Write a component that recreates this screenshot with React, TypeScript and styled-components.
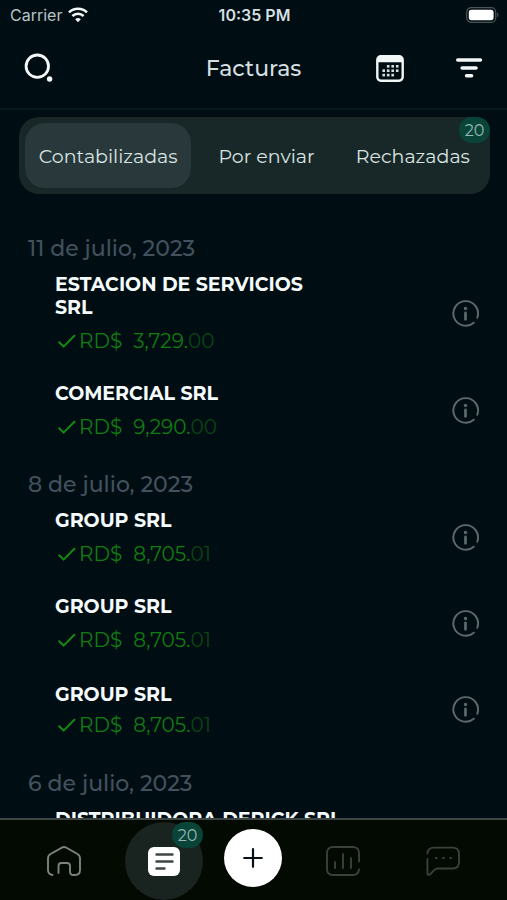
import React from "react";
import styled, { createGlobalStyle } from "styled-components";

const GlobalStyle = createGlobalStyle`
  * { box-sizing: border-box; }
  body {
    margin: 0;
    background: #000e13;
    font-family: Montserrat, Inter, sans-serif;
    color: #d5dfe0;
  }
  button { font: inherit; color: inherit; background: none; border: 0; padding: 0; cursor: pointer; }
  h1, h2, h3, p, ul { margin: 0; padding: 0; font-weight: 400; }
  ul { list-style: none; }
  svg { display: block; }
`;

const Screen = styled.div`
  display: flex;
  flex-direction: column;
  height: 100vh;
  overflow: hidden;
`;

const StatusBar = styled.div`
  display: grid;
  grid-template-columns: 1fr auto 1fr;
  align-items: center;
  height: 30px;
  flex: none;
  padding: 0 8px 0 10px;
  font-family: Inter, sans-serif;
  font-size: 16px;
`;

const Carrier = styled.div`
  display: flex;
  align-items: center;
  gap: 6px;
  color: #b9c2c5;
`;

const Clock = styled.time`
  font-weight: 600;
`;

const Battery = styled.div`
  justify-self: end;
`;

const Header = styled.header`
  display: grid;
  grid-template-columns: 1fr auto 1fr;
  align-items: center;
  flex: none;
  height: 80px;
  padding: 0 24px 2px;
  border-bottom: 2px solid #07191d;
`;

const Title = styled.h1`
  padding-top: 2px;
  font-size: 22px;
  font-weight: 500;
  line-height: 28px;
`;

const Actions = styled.div`
  display: flex;
  justify-content: flex-end;
  gap: 51px;
`;

const IconButton = styled.button`
  display: grid;
  place-items: center;
  justify-self: start;
  height: 30px;
`;

const Tabs = styled.div`
  position: relative;
  display: grid;
  grid-template-columns: 166fr 150fr 142fr;
  flex: none;
  margin: 7px 17px 0 19px;
  padding: 6px;
  height: 77px;
  border-radius: 20px;
  background: #182828;
`;

const Tab = styled.button<{ $active?: boolean }>`
  padding-top: 2px;
  border-radius: 20px;
  font-size: 19px;
  white-space: nowrap;
  color: #d8e3e2;
  background: ${(p) => (p.$active ? "#28383b" : "transparent")};
`;

const Badge = styled.span`
  position: absolute;
  top: 0;
  right: 0;
  display: grid;
  place-items: center;
  width: 31px;
  height: 26px;
  border-radius: 13px;
  background: #0a4439;
  color: #94b7b1;
  font-size: 16px;
`;

const List = styled.main`
  flex: 1;
  min-height: 0;
  margin-top: 41px;
  overflow-y: auto;
  scrollbar-width: none;
`;

const Day = styled.section`
  padding: 0 28px;
  margin-bottom: 32px;
`;

const DayTitle = styled.h2`
  font-size: 22px;
  font-weight: 500;
  line-height: 28px;
  margin-bottom: 10px;
  color: #43515e;
`;

const Invoices = styled.ul`
  display: flex;
  flex-direction: column;
  gap: 29px;
`;

const Invoice = styled.li<{ $titleOnly?: boolean }>`
  display: flex;
  align-items: center;
  justify-content: space-between;
  min-height: ${(p) => (p.$titleOnly ? 23 : 57)}px;
  padding-left: 27px;
`;

const Summary = styled.div<{ $tight?: boolean }>`
  display: flex;
  flex-direction: column;
  gap: ${(p) => (p.$tight ? 7 : 10)}px;
  max-width: 290px;
`;

const Vendor = styled.h3`
  font-size: 19px;
  line-height: 23px;
  font-weight: 700;
  color: #f5fbfd;
`;

const Amount = styled.p`
  display: flex;
  align-items: center;
  padding-left: 3px;
  font-size: 20px;
  line-height: 24px;
  color: #107c12;
`;

const Currency = styled.span`
  margin: 0 11px 0 3px;
`;

const Cents = styled.span`
  color: #0b4415;
`;

const Nav = styled.nav`
  display: grid;
  grid-template-columns: 100fr 100fr 78fr 102fr 98fr;
  align-items: center;
  justify-items: center;
  flex: none;
  height: 82px;
  padding: 2px 15px 0 14px;
  border-top: 2px solid #3e4645;
  background: #030a02;
`;

const NavItem = styled.button<{ $active?: boolean }>`
  position: relative;
  display: grid;
  place-items: center;
  width: 78px;
  height: 78px;
  border-radius: 50%;
  background: ${(p) => (p.$active ? "#19231f" : "transparent")};
`;

const AddButton = styled.button`
  display: grid;
  place-items: center;
  width: 58px;
  height: 58px;
  margin-bottom: 6px;
  border-radius: 50%;
  background: #fff;
`;

const Wifi = () => (
  <svg width="20" height="16" viewBox="0 0 20 16" fill="none" stroke="#f4f8f9" strokeWidth="2.6" aria-hidden="true">
    <path d="M1 5.4a13 13 0 0 1 18 0M4.4 9a8 8 0 0 1 11.2 0" />
    <path d="M10 15.2 7.2 12.3a4 4 0 0 1 5.6 0Z" fill="#f4f8f9" stroke="none" />
  </svg>
);

const BatteryIcon = () => (
  <svg width="33" height="16" viewBox="0 0 33 16" aria-hidden="true">
    <rect x=".7" y=".7" width="29" height="14.6" rx="4.5" fill="none" stroke="#4b5557" strokeWidth="1.2" />
    <rect x="2.8" y="2.8" width="24.8" height="10.4" rx="2.6" fill="#fff" />
    <path d="M31.2 5.5c1.6.8 1.6 4.2 0 5Z" fill="#4b5557" />
  </svg>
);

const SearchIcon = () => (
  <svg width="30" height="30" viewBox="0 0 30 30" aria-hidden="true">
    <circle cx="13.3" cy="13.2" r="11.2" fill="none" stroke="#f4f8f9" strokeWidth="2.8" />
    <circle cx="25.6" cy="26" r="2.7" fill="#f4f8f9" />
  </svg>
);

const calendarDots = [
  [11.5, 11], [16, 11], [20.5, 11],
  [7, 15.4], [11.5, 15.4], [16, 15.4], [20.5, 15.4],
  [7, 19.8], [11.5, 19.8], [16, 19.8],
];

const CalendarIcon = () => (
  <svg width="28" height="27" viewBox="0 0 28 27" aria-hidden="true">
    <rect x="1.3" y="1.3" width="25.4" height="24.4" rx="3.6" fill="none" stroke="#f1f7f7" strokeWidth="2.4" />
    <path d="M1 7.2V5a4 4 0 0 1 4-4h18a4 4 0 0 1 4 4v2.2Z" fill="#f1f7f7" />
    {calendarDots.map(([x, y]) => (
      <rect key={`${x}-${y}`} x={x - 0.6} y={y - 1} width="2.6" height="2.6" fill="#d5dedf" />
    ))}
  </svg>
);

const FilterIcon = () => (
  <svg width="28" height="22" viewBox="0 0 28 22" stroke="#f4f8f9" strokeWidth="3.6" strokeLinecap="round" aria-hidden="true">
    <path d="M2.8 3h22.600M7.200 11h13.800M11.600 18.800h5" />
  </svg>
);

const CheckIcon = () => (
  <svg width="18" height="14" viewBox="0 0 18 14" fill="none" stroke="#148a14" strokeWidth="2" strokeLinecap="round" strokeLinejoin="round" aria-hidden="true">
    <path d="M1.200 8.200 5.600 12.600 16.400 1.800" />
  </svg>
);

const InfoIcon = () => (
  <svg width="27" height="27" viewBox="0 0 28 28" fill="none" stroke="#5d696b" strokeLinecap="round" aria-hidden="true">
    <path d="M26.2 18.4A12.8 12.8 0 1 0 22.6 23.6" strokeWidth="2" />
    <path d="M14 13.4v6.6" strokeWidth="2.8" />
    <circle cx="14" cy="8.8" r="1.700" fill="#5d696b" stroke="none" />
  </svg>
);

const HomeIcon = () => (
  <svg width="34" height="30" viewBox="0 0 34 30" fill="none" stroke="#7e837d" strokeWidth="1.9" strokeLinecap="round" strokeLinejoin="round" aria-hidden="true">
    <path d="M5.5 29C2.8 28.5 1 26.5 1 24V12.5c0-2 .8-3.500 2.500-4.500L14.500 1.800c1.700-1 3.300-1 5 0L30.500 8c1.700 1 2.500 2.500 2.500 4.500V24c0 3-2 5-5 5h-1.500c-2 0-3.500-1.200-3.500-3.500V20c0-2-1-3-3-3h-5.500c-2 0-3 1-3 3v7" />
  </svg>
);

const InvoiceIcon = () => (
  <svg width="32" height="29" viewBox="0 0 32 29" aria-hidden="true">
    <rect width="32" height="29" rx="6" fill="#fff" />
    <path d="M8.5 7.500h16M8.500 14.500h16M8.500 21.500h8" stroke="#3f4745" strokeWidth="2.400" strokeLinecap="round" />
  </svg>
);

const PlusIcon = () => (
  <svg width="20" height="20" viewBox="0 0 20 20" stroke="#071014" strokeWidth="2.2" strokeLinecap="round" aria-hidden="true">
    <path d="M10 1.2v17.6M1.2 10h17.600" />
  </svg>
);

const ChartIcon = () => (
  <svg width="34" height="30" viewBox="0 0 34 30" fill="none" stroke="#3a413a" strokeWidth="1.9" strokeLinecap="round" aria-hidden="true">
    <path d="M33 15.500V7c0-3.800-2.200-6-6-6H7C3.200 1 1 3.200 1 7v16c0 3.800 2.200 6 6 6h20c3.600 0 5.800-2 6-5.600" />
    <path d="M9 16v6M17 8v14M25 12v10" />
  </svg>
);

const ChatIcon = () => (
  <svg width="34" height="30" viewBox="0 0 34 30" fill="none" stroke="#3a413a" strokeWidth="1.9" strokeLinecap="round" strokeLinejoin="round" aria-hidden="true">
    <path d="M1.4 7.500C1.800 3.600 4 1.600 8 1.600h18.500c4 0 6.500 2.200 6.500 6.200v8.400c0 4-2.500 6.300-6.500 6.300H12c-1.500 0-2.500.4-3.500 1.400l-4 4C3 29.400 1.400 29 1.400 27V13" />
    <path d="M10 12h.6M17.200 12h.6M24.400 12h.6" strokeWidth="2.2" />
  </svg>
);

type Entry = { vendor: string; whole?: string; cents?: string; tight?: boolean };

const days: { date: string; entries: Entry[] }[] = [
  {
    date: "11 de julio, 2023",
    entries: [
      { vendor: "ESTACION DE SERVICIOS SRL", whole: "3,729.", cents: "00" },
      { vendor: "COMERCIAL SRL", whole: "9,290.", cents: "00" },
    ],
  },
  {
    date: "8 de julio, 2023",
    entries: [
      { vendor: "GROUP SRL", whole: "8,705.", cents: "01" },
      { vendor: "GROUP SRL", whole: "8,705.", cents: "01" },
      { vendor: "GROUP SRL", whole: "8,705.", cents: "01", tight: true },
    ],
  },
  {
    date: "6 de julio, 2023",
    entries: [{ vendor: "DISTRIBUIDORA DERICK SRL" }],
  },
];

export default function App() {
  return (
    <Screen>
      <GlobalStyle />
      <StatusBar>
        <Carrier>
          Carrier <Wifi />
        </Carrier>
        <Clock>10:35 PM</Clock>
        <Battery>
          <BatteryIcon />
        </Battery>
      </StatusBar>
      <Header>
        <IconButton aria-label="Buscar">
          <SearchIcon />
        </IconButton>
        <Title>Facturas</Title>
        <Actions>
          <IconButton aria-label="Calendario">
            <CalendarIcon />
          </IconButton>
          <IconButton aria-label="Filtrar">
            <FilterIcon />
          </IconButton>
        </Actions>
      </Header>
      <Tabs role="tablist">
        <Tab role="tab" aria-selected="true" $active>
          Contabilizadas
        </Tab>
        <Tab role="tab" aria-selected="false">
          Por enviar
        </Tab>
        <Tab role="tab" aria-selected="false">
          Rechazadas
          <Badge>20</Badge>
        </Tab>
      </Tabs>
      <List>
        {days.map((day) => (
          <Day key={day.date}>
            <DayTitle>{day.date}</DayTitle>
            <Invoices>
              {day.entries.map((entry, i) => (
                <Invoice key={i} $titleOnly={!entry.whole}>
                  <Summary $tight={entry.tight}>
                    <Vendor>{entry.vendor}</Vendor>
                    {entry.whole && (
                      <Amount>
                        <CheckIcon />
                        <Currency>RD$</Currency>
                        <span>{entry.whole}</span>
                        <Cents>{entry.cents}</Cents>
                      </Amount>
                    )}
                  </Summary>
                  {entry.whole && (
                    <IconButton aria-label={`Detalles de ${entry.vendor}`}>
                      <InfoIcon />
                    </IconButton>
                  )}
                </Invoice>
              ))}
            </Invoices>
          </Day>
        ))}
      </List>
      <Nav>
        <NavItem aria-label="Inicio">
          <HomeIcon />
        </NavItem>
        <NavItem aria-label="Facturas" aria-current="page" $active>
          <InvoiceIcon />
          <Badge>20</Badge>
        </NavItem>
        <AddButton aria-label="Agregar">
          <PlusIcon />
        </AddButton>
        <NavItem aria-label="Reportes">
          <ChartIcon />
        </NavItem>
        <NavItem aria-label="Mensajes">
          <ChatIcon />
        </NavItem>
      </Nav>
    </Screen>
  );
}
